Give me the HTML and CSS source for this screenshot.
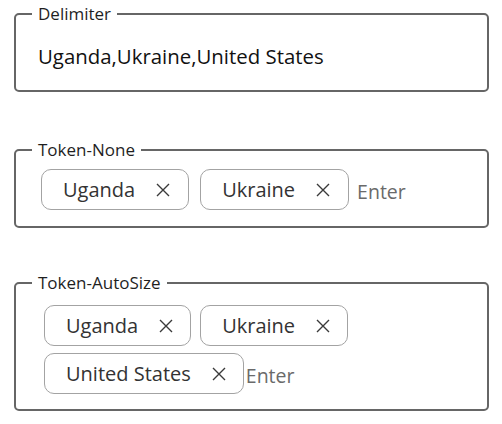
FILE: index.html
```html
<!DOCTYPE html>
<html>
<head>
<meta charset="utf-8">
<link rel="stylesheet" href="styles.css">
</head>
<body>
<div class="page">
  <fieldset class="box box-delim">
    <legend class="label">Delimiter</legend>
    <div class="plain">Uganda,Ukraine,United States</div>
  </fieldset>

  <fieldset class="box box-none">
    <legend class="label">Token-None</legend>
    <div class="tokens tokens-none">
      <span class="token"><span class="tk-text">Uganda</span><svg class="tk-x" viewBox="0 0 16 16"><path d="M2 2L14 14M14 2L2 14"/></svg></span>
      <span class="token"><span class="tk-text">Ukraine</span><svg class="tk-x" viewBox="0 0 16 16"><path d="M2 2L14 14M14 2L2 14"/></svg></span>
      <span class="enter">Enter</span>
    </div>
  </fieldset>

  <fieldset class="box box-auto">
    <legend class="label">Token-AutoSize</legend>
    <div class="tokens tokens-auto">
      <span class="token"><span class="tk-text">Uganda</span><svg class="tk-x" viewBox="0 0 16 16"><path d="M2 2L14 14M14 2L2 14"/></svg></span>
      <span class="token"><span class="tk-text">Ukraine</span><svg class="tk-x" viewBox="0 0 16 16"><path d="M2 2L14 14M14 2L2 14"/></svg></span>
      <span class="token"><span class="tk-text">United States</span><svg class="tk-x" viewBox="0 0 16 16"><path d="M2 2L14 14M14 2L2 14"/></svg></span>
      <span class="enter enter-auto">Enter</span>
    </div>
  </fieldset>
</div>
</body>
</html>
```

FILE: styles.css
```css
html, body {
  margin: 0;
  padding: 0;
  background: #ffffff;
}

body {
  font-family: "Open Sans", "Noto Sans", sans-serif;
  color: #1a1a1a;
}

.page {
  padding: 4px 0 0 14px;
  width: 475px;
  display: flex;
  flex-direction: column;
}

.box {
  margin: 0;
  padding: 0;
  border: 2px solid #666666;
  border-radius: 5px;
  min-width: 0;
}

.label {
  margin-left: 16px;
  padding: 0 6px;
  font-size: 17px;
  line-height: 20px;
  color: #1f1f1f;
}

.plain {
  padding: 18px 0 0 22px;
  font-size: 20.4px;
  line-height: 28px;
  color: #111111;
}

.box-delim {
  height: 84px;
}

.box-none {
  margin-top: 48px;
}

.box-auto {
  margin-top: 45px;
}

.tokens {
  display: flex;
  flex-wrap: wrap;
  align-items: center;
}

.tokens-none {
  padding: 9px 0 16px 25px;
  column-gap: 11px;
}

.tokens-auto {
  padding: 12px 0 15px 28px;
  column-gap: 9px;
  row-gap: 7px;
  width: 330px;
}

.token {
  display: inline-flex;
  align-items: center;
  height: 41px;
  box-sizing: border-box;
  border: 1px solid #a3a3a3;
  border-radius: 10px;
  padding: 0 17px 0 21px;
  gap: 20px;
  font-size: 20px;
  color: #333333;
}

.tokens-auto .token {
  padding-right: 16px;
}

.tk-text {
  line-height: 24px;
}

.tk-x {
  width: 16px;
  height: 16px;
  fill: none;
  stroke: #3a3a3a;
  stroke-width: 1.4;
}

.enter {
  font-size: 19.5px;
  color: #6a6a6a;
  margin-left: -3px;
  padding-top: 4px;
}

.enter-auto {
  margin-left: -7px;
}
```
